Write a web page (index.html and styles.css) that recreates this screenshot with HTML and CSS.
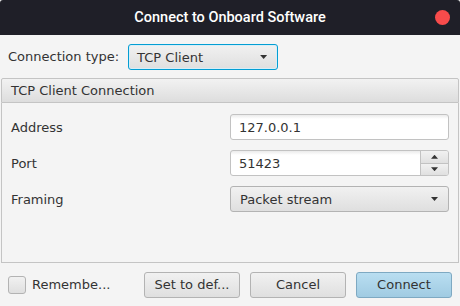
FILE: index.html
```html
<!DOCTYPE html>
<html>
<head>
<meta charset="utf-8">
<link rel="stylesheet" href="styles.css">
</head>
<body>
<div class="window">
  <div class="titlebar">
    <span class="title">Connect to Onboard Software</span>
    <span class="close"></span>
  </div>
  <div class="type-row">
    <span class="label">Connection type:</span>
    <div class="combo focused"><span>TCP Client</span><span class="arrow"></span></div>
  </div>
  <div class="panel">
    <div class="panel-header">TCP Client Connection</div>
    <div class="panel-body">
      <div class="row">
        <span class="label">Address</span>
        <div class="field">127.0.0.1</div>
      </div>
      <div class="row">
        <span class="label">Port</span>
        <div class="field spinner">
          <span class="spin-text">51423</span>
          <div class="spin-buttons">
            <div class="spin-btn"><span class="arrow up"></span></div>
            <div class="spin-btn"><span class="arrow"></span></div>
          </div>
        </div>
      </div>
      <div class="row">
        <span class="label">Framing</span>
        <div class="combo wide"><span>Packet stream</span><span class="arrow"></span></div>
      </div>
    </div>
  </div>
  <div class="footer">
    <label class="check"><span class="box"></span><span class="check-text">Remembe...</span></label>
    <button class="btn">Set to def...</button>
    <button class="btn">Cancel</button>
    <button class="btn default">Connect</button>
  </div>
</div>
</body>
</html>
```
FILE: styles.css
```css
html, body {
  margin: 0;
  padding: 0;
  background: #f4f4f4;
}
.window {
  width: 460px;
  height: 306px;
  display: flex;
  flex-direction: column;
  font-family: "DejaVu Sans", sans-serif;
  font-size: 13px;
  color: #333333;
  background: #f4f4f4;
}
.titlebar {
  height: 35px;
  flex: none;
  background: #1f1f28;
  border-radius: 3px 3px 0 0;
  display: flex;
  align-items: center;
  justify-content: center;
  position: relative;
}
.title {
  font-family: Roboto, sans-serif;
  font-weight: 500;
  font-size: 14.5px;
  color: #ffffff;
}
.close {
  position: absolute;
  right: 10px;
  top: 10px;
  width: 15px;
  height: 15px;
  border-radius: 50%;
  background: #f74b4b;
}
.type-row {
  height: 43px;
  flex: none;
  display: flex;
  align-items: center;
  padding-left: 8px;
  gap: 9px;
}
.combo {
  box-sizing: border-box;
  height: 26px;
  border: 1px solid #b3b3b3;
  border-radius: 3px;
  background: linear-gradient(#f1f1f1, #dfdfdf);
  display: flex;
  align-items: center;
  justify-content: space-between;
  padding: 0 10px 0 8px;
}
.combo.focused {
  width: 150px;
  border: 1px solid #039ed3;
  box-shadow: inset 0 0 0 1px #d7eef8;
  margin-top: 1px;
}
.arrow {
  width: 7px;
  height: 4px;
  background: #333333;
  clip-path: polygon(0 0, 100% 0, 50% 100%);
}
.arrow.up {
  clip-path: polygon(50% 0, 100% 100%, 0 100%);
}
.panel {
  flex: none;
  margin: 0 1px;
  height: 185px;
  display: flex;
  flex-direction: column;
}
.panel-header {
  box-sizing: border-box;
  height: 25px;
  border: 1px solid #c4c4c4;
  border-radius: 2px 2px 0 0;
  background: linear-gradient(#f2f2f2, #dddddd);
  padding-left: 9px;
  display: flex;
  align-items: center;
}
.panel-body {
  flex: 1;
  border: 1px solid #c4c4c4;
  border-top: none;
  padding: 11px 9px 0 9px;
  display: flex;
  flex-direction: column;
  gap: 10px;
}
.row {
  height: 26px;
  display: flex;
  align-items: center;
  justify-content: space-between;
}
.field {
  box-sizing: border-box;
  width: 219px;
  height: 26px;
  border: 1px solid #c2c2c2;
  border-radius: 3px;
  background: linear-gradient(#ebebeb 0px, #ffffff 4px);
  padding-left: 8px;
  display: flex;
  align-items: center;
}
.spinner {
  justify-content: space-between;
  overflow: hidden;
}
.spin-buttons {
  width: 27px;
  height: 100%;
  display: flex;
  flex-direction: column;
  border-left: 1px solid #c2c2c2;
}
.spin-btn {
  flex: 1;
  display: flex;
  align-items: center;
  justify-content: center;
  background: linear-gradient(#f1f1f1, #e0e0e0);
}
.spin-btn + .spin-btn {
  border-top: 1px solid #c2c2c2;
}
.combo.wide {
  width: 219px;
  padding-left: 9px;
}
.footer {
  flex: 1;
  display: flex;
  align-items: center;
  padding: 0 8px;
  gap: 10px;
}
.check {
  display: flex;
  align-items: center;
  gap: 6px;
  width: 126px;
}
.box {
  box-sizing: border-box;
  width: 18px;
  height: 18px;
  border: 1px solid #b3b3b3;
  border-radius: 3px;
  background: linear-gradient(#f1f1f1, #dfdfdf);
}
.btn {
  box-sizing: border-box;
  width: 96px;
  height: 26px;
  border: 1px solid #b3b3b3;
  border-radius: 3px;
  background: linear-gradient(#f1f1f1, #dfdfdf);
  font-family: "DejaVu Sans", sans-serif;
  font-size: 13px;
  color: #333333;
  padding: 0;
}
.btn.default {
  border-color: #7ea9c2;
  background: linear-gradient(#b9def1, #a0cbe2);
}
```
